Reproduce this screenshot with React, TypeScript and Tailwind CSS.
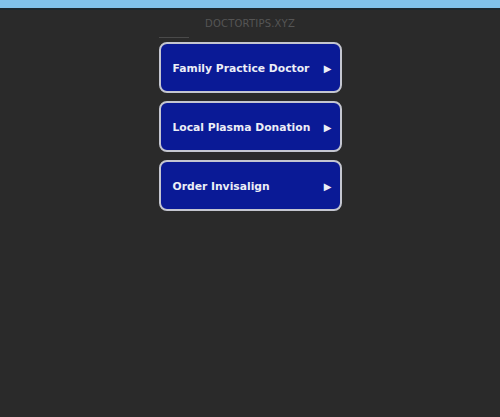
import React from "react";

const items = ["Family Practice Doctor", "Local Plasma Donation", "Order Invisalign"];

export default function App() {
  return (
    <div className="w-[500px] h-[417px] bg-[#2a2a2a] flex flex-col" style={{ fontFamily: "'DejaVu Sans', sans-serif" }}>
      <div className="h-[8px] bg-[#80c4ec] shrink-0" />
      <div className="h-[2px] bg-[#1c2a30] shrink-0" />
      <div className="text-center text-[#555555] text-[10px] tracking-[0.02em] mt-[8px] leading-[12px]">DOCTORTIPS.XYZ</div>
      <div className="w-[183px] mx-auto mt-[7px] flex flex-col">
        <div className="w-[30px] h-[1px] bg-[#4a4a4a] mb-[4px]" />
        <div className="flex flex-col gap-[8px]">
          {items.map((t) => (
            <div key={t} className="h-[51px] rounded-[8px] border-2 border-[#c4c6d0] bg-[#0a1a96] flex items-center justify-between pl-[12px] pr-[8px]">
              <span className="text-[#eceef6] font-bold text-[10.75px] tracking-[0em] mt-[3px]">{t}</span>
              <span className="text-[#eceef6] text-[10px] mt-[1px]">▶</span>
            </div>
          ))}
        </div>
      </div>
    </div>
  );
}
